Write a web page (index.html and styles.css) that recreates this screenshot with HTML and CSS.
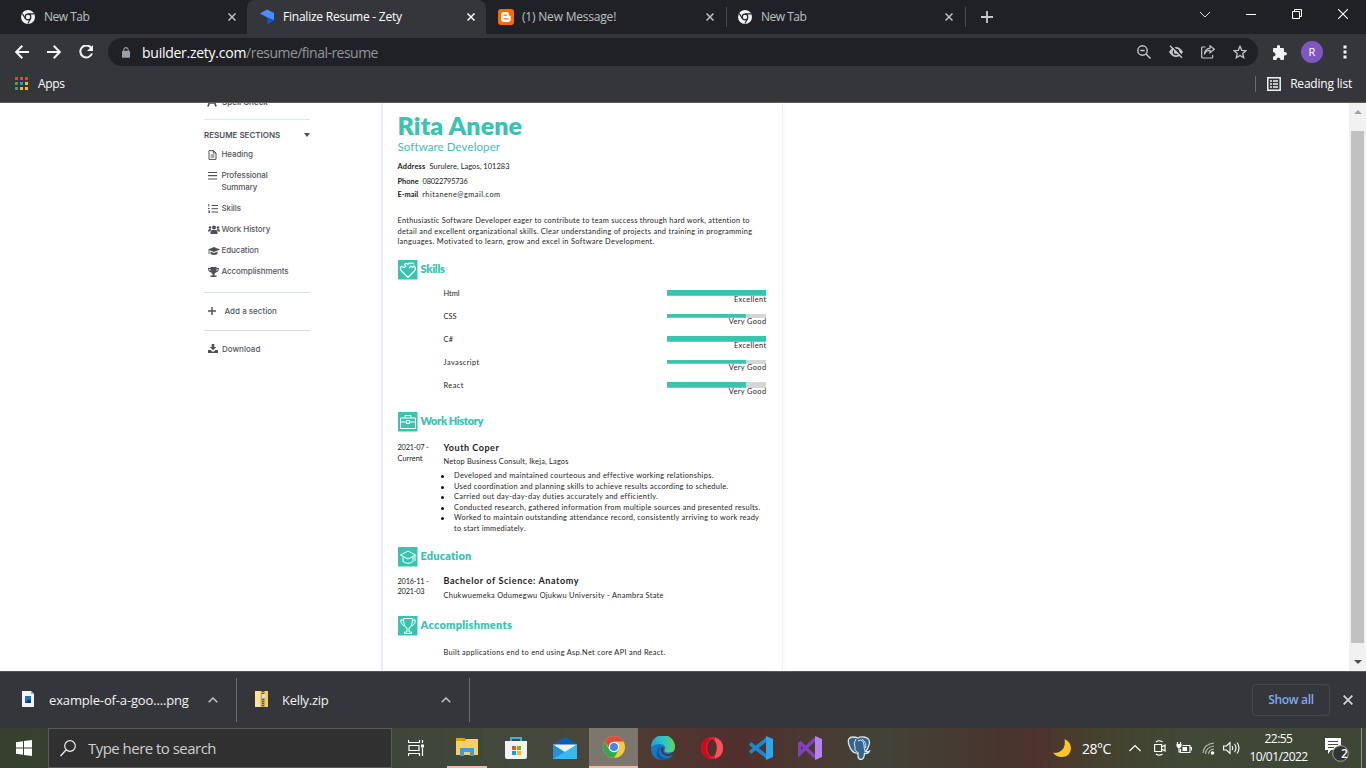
FILE: index.html
```html
<!DOCTYPE html>
<html lang="en">
<head>
<meta charset="utf-8">
<title>Finalize Resume - Zety</title>
<link rel="stylesheet" href="styles.css">
</head>
<body>
<svg class="defs" width="0" height="0">
  <symbol id="chromium" viewBox="0 0 14 14"><circle cx="7" cy="7" r="7" fill="#f1f3f4"/><circle cx="7" cy="7" r="3.4" fill="#202124"/><circle cx="7" cy="7" r="2.2" fill="#f1f3f4"/><path d="M7 3.9h6M4.3 8.5 1.3 3.6M9.7 8.6 6.9 13.6" stroke="#202124" stroke-width="1.1"/></symbol>
  <symbol id="x" viewBox="0 0 8 8"><path d="M.5.5l7 7M7.5.5l-7 7" stroke="currentColor" stroke-width="1.5"/></symbol>
  <symbol id="up" viewBox="0 0 10 6"><path d="M.7 5.3 5 1l4.300 4.300" fill="none" stroke="currentColor" stroke-width="1.500"/></symbol>
</svg>
<header class="tabs">
  <div class="tab first"><svg class="fav" width="14" height="14"><use href="#chromium"/></svg><span class="t-new">New Tab</span><svg class="close" width="8" height="8"><use href="#x"/></svg></div>
  <div class="tab active"><svg class="fav" width="15" height="16" viewBox="0 0 15 16"><path d="M0 4.500 7 .500l7 3.500v7.500L7.500 15.500V9z" fill="#0b57d0"/><path d="M0 4.500 7 .500l7 3.500v7L6.500 8z" fill="#4a8cff"/></svg><span class="t-zety">Finalize Resume - Zety</span><svg class="close" width="8" height="8"><use href="#x"/></svg></div>
  <div class="tab blog"><svg class="fav" width="16" height="16" viewBox="0 0 16 16"><rect width="16" height="16" rx="3" fill="#ff6a00"/><path d="M6 3h2.500Q11 3 11 6q0 .8 1 .8.8 0 .8.900V10q0 3-3 3H6q-3 0-3-3V6q0-3 3-3z" fill="#fff"/><path d="M6 6.200h2.300M6 9.800h4" stroke="#ff6a00" stroke-width="1.300" stroke-linecap="round"/></svg><span class="t-msg">(1) New Message!</span><svg class="close" width="8" height="8"><use href="#x"/></svg></div>
  <div class="tab last"><svg class="fav" width="14" height="14"><use href="#chromium"/></svg><span class="t-new">New Tab</span><svg class="close" width="8" height="8"><use href="#x"/></svg></div>
  <svg class="plus" width="12" height="12" viewBox="0 0 12 12"><path d="M6 0v12M0 6h12" stroke="#c8cacd" stroke-width="1.800"/></svg>
  <div class="winctl">
    <svg width="10" height="7" viewBox="0 0 10 7"><path d="M0 1l5 5 5-5" fill="none" stroke="#ddd"/></svg>
    <svg width="10" height="10" viewBox="0 0 10 10"><path d="M0 5.500h10" stroke="#fff"/></svg>
    <svg width="10" height="10" viewBox="0 0 10 10"><path d="M.5 2.500h7v7h-7zM2.500 2.500v-2h7v7h-2" fill="none" stroke="#fff"/></svg>
    <svg width="10" height="10" viewBox="0 0 10 10"><path d="M0 0l10 10M10 0 0 10" stroke="#fff" stroke-width="1.100"/></svg>
  </div>
</header>
<div class="toolbar">
  <svg class="back" width="14" height="14" viewBox="0 0 14 14"><path d="M14 7H1.500M7.300.8 1.100 7l6.200 6.200" fill="none" stroke="#f1f3f4" stroke-width="2"/></svg>
  <svg class="fwd" width="14" height="14" viewBox="0 0 14 14"><path d="M0 7h12.500M6.700.8 12.900 7l-6.200 6.200" fill="none" stroke="#f1f3f4" stroke-width="2"/></svg>
  <svg class="reload" width="14" height="14" viewBox="0 0 14 14"><path d="M12 2.700A6 6 0 1 0 13 8.500" fill="none" stroke="#f1f3f4" stroke-width="2"/><path d="M14 0v6H8z" fill="#f1f3f4"/></svg>
  <div class="omnibox">
    <svg class="lock" width="8" height="11" viewBox="0 0 9 12"><rect y="4" width="9" height="8" rx="1" fill="#9aa0a6"/><path d="M2 5V3a2.500 2.500 0 0 1 5 0v2" fill="none" stroke="#9aa0a6" stroke-width="1.200"/></svg>
    <span class="url"><b>builder.zety.com</b>/resume/final-resume</span>
    <div class="omni-icons">
      <svg width="14" height="14" viewBox="0 0 14 14"><circle cx="5.500" cy="5.500" r="4.700" fill="none" stroke="#c4c7ca" stroke-width="1.400"/><path d="M9 9l4.500 4.500M3.300 5.500h4.400" stroke="#c4c7ca" stroke-width="1.500"/></svg>
      <svg width="14" height="14" viewBox="0 0 14 14"><path d="M0 7Q3 2 7 2T14 7q-3 5-7 5T0 7z" fill="#c4c7ca"/><circle cx="7" cy="7" r="2.700" fill="none" stroke="#202124" stroke-width="1.200"/><path d="M2.200 0l12 12" stroke="#202124" stroke-width="1.600"/><path d="M1 .8l12 12" stroke="#c4c7ca" stroke-width="1.500"/></svg>
      <svg width="14" height="14" viewBox="0 0 14 14"><path d="M4.500 2H1.700q-1 0-1 1v9q0 1 1 1h9q1 0 1-1v-2M3.500 9.500Q4 5.500 9 5.300v2.500l4.300-3.600L9 .8v2.400Q3.500 4 3.500 9.500z" fill="none" stroke="#c4c7ca" stroke-width="1.200"/></svg>
      <svg width="14" height="14" viewBox="0 0 14 14"><path d="M7 1.300l1.700 4 4.300.4-3.300 2.800 1 4.200L7 10.500l-3.700 2.200 1-4.200L1 5.700l4.300-.4z" fill="none" stroke="#c4c7ca" stroke-width="1.300"/></svg>
    </div>
  </div>
  <svg class="ext" width="15" height="15" viewBox="0 0 15 15"><path d="M1 4q0-1 1-1h3Q4.500 0 6.500 0T8 3h3q1 0 1 1v3q3-.2 3 1.800T12 10.500V14q0 1-1 1H8.500q.2-2.500-2-2.500t-2 2.500H2q-1 0-1-1v-2.500q2.500.2 2.500-2T1 7z" fill="#f1f3f4"/></svg>
  <span class="avatar">R</span>
  <svg class="dots" width="4" height="14" viewBox="0 0 4 14"><path d="M.5.500h3v3h-3zM.5 5.500h3v3h-3zM.5 10.500h3v3h-3z" fill="#f1f3f4"/></svg>
</div>
<div class="bookmarks">
  <svg class="apps" width="13" height="14" viewBox="0 0 13 14"><path d="M0 0h3v3H0zM5 0h3v3H5zM10 0h3v3h-3z" fill="#ea4335"/><path d="M0 5h3v3H0zM0 10h3v3H0z" fill="#34a853"/><path d="M5 5h3v3H5z" fill="#2f8df5"/><path d="M10 5h3v3h-3zM5 10h3v3H5zM10 10h3v3h-3z" fill="#fbbc05"/></svg>
  <span class="t-apps">Apps</span>
  <i class="vr"></i>
  <svg width="14" height="14" viewBox="0 0 14 14"><path d="M.8.8h12.400v12.400H.8z" fill="none" stroke="#f1f3f4" stroke-width="1.500"/><path d="M3 4h2M6 4h5M3 7h2M6 7h5M3 10h2M6 10h5" stroke="#f1f3f4" stroke-width="1.600"/></svg>
  <span class="t-read">Reading list</span>
</div>

<main class="page">
  <aside class="side">
    <div class="spell"><svg width="10" height="10" viewBox="0 0 10 10"><path d="M1 9.500 4 1h2l3 8.500M2.500 6h5" fill="none" stroke="#4f5159" stroke-width="1.700"/></svg><span>Spell Check</span></div>
    <div class="sec-title"><span>RESUME SECTIONS</span><i class="tri"></i></div>
    <ul class="nav">
      <li><svg width="9" height="10" viewBox="0 0 9 10"><path d="M1 .6h4.500L8 3v6.400H1zM5.300.6V3H8M2.700 5h3.600M2.700 7h3.600" fill="none" stroke="#4f5159"/></svg><span>Heading</span></li>
      <li class="two"><svg width="9" height="9" viewBox="0 0 9 9"><path d="M0 1.500h9M0 4.700h9M0 8h9" stroke="#4f5159" stroke-width="1.200"/></svg><span>Professional<br>Summary</span></li>
      <li><svg width="10" height="9" viewBox="0 0 10 9"><path d="M3.500 1.500H10M3.500 4.700H10M3.500 8H10M.8 0v2.500M0 4.500h1.500M0 7h1.500v2H0" fill="none" stroke="#4f5159"/></svg><span>Skills</span></li>
      <li><svg width="12" height="9" viewBox="0 0 12 9"><circle cx="6" cy="2.500" r="2"/><circle cx="2" cy="2.500" r="1.300"/><circle cx="10" cy="2.500" r="1.300"/><path d="M2.500 9V7q0-2 2-2h3q2 0 2 2v2zM0 6q0-2 2-2 1 0 1.300.5L2 6.500H0zM12 6q0-2-2-2-1 0-1.300.5L10 6.500h2z"/></svg><span>Work History</span></li>
      <li><svg width="12" height="9" viewBox="0 0 12 9"><path d="M0 3.500 6 1l6 2.500L6 6z"/><path d="M2.500 5.500 6 7l3.500-1.500V8Q6 9.800 2.500 8zM.6 4h.9v4H.6z"/></svg><span>Education</span></li>
      <li><svg width="11" height="10" viewBox="0 0 11 10"><path d="M2.500 0h6v1H11q0 4-3.200 4.500L6.500 7v1.500h2V10h-6V8.500h2V7L3.200 5.500Q0 5 0 1h2.500z"/><path d="M1 2h1.300l.3 2Q1.200 3.500 1 2zm9 0H8.700l-.3 2Q9.800 3.500 10 2z" fill="#fff"/></svg><span>Accomplishments</span></li>
    </ul>
    <div class="action add"><svg width="8" height="8" viewBox="0 0 8 8"><path d="M4 0v8M0 4h8" stroke="#4f5159" stroke-width="1.400"/></svg><span>Add a section</span></div>
    <div class="action dl"><svg width="10" height="9" viewBox="0 0 10 9"><path d="M3.700 0h2.600v3h2L5 6.200 1.700 3h2zM0 6h2.500L5 8l2.500-2H10v3H0z"/></svg><span>Download</span></div>
  </aside>

  <article class="resume">
    <h1>Rita Anene</h1>
    <p class="role">Software Developer</p>
    <p class="contact addr"><b>Address</b><span>Surulere, Lagos, 101283</span></p>
    <p class="contact phone"><b>Phone</b><span>08022795736</span></p>
    <p class="contact mail"><b>E-mail</b><span>rhitanene@gmail.com</span></p>
    <p class="summary"><span class="s1">Enthusiastic Software Developer eager to contribute to team success through hard work, attention to</span><br><span class="s2">detail and excellent organizational skills. Clear understanding of projects and training in programming</span><br><span class="s3">languages. Motivated to learn, grow and excel in Software Development.</span></p>

    <h2 class="h-skills"><svg width="20" height="20" viewBox="0 0 20 20"><rect width="19.500" height="19.500" fill="#3bc3b2"/><path d="M10 17.500 3 10.500Q1.500 8 3.500 6.200L6 7.500l2-1.200L6.500 4.500Q8.500 2.500 10 4.500 11 2 12.700 3.700 14.500 2 16 4.500M11 8l2-2 1.500 1.500L16.500 6Q18.500 8.500 16.500 11L10 17.500" fill="none" stroke="#fff" stroke-width="1.100"/></svg><span>Skills</span></h2>
    <ul class="skills">
      <li><span class="k html">Html</span><div class="rate"><div class="bar"><i style="width:100%"></i></div><em>Excellent</em></div></li>
      <li><span class="k css">CSS</span><div class="rate"><div class="bar"><i style="width:80%"></i></div><em>Very Good</em></div></li>
      <li><span class="k">C#</span><div class="rate"><div class="bar"><i style="width:100%"></i></div><em>Excellent</em></div></li>
      <li><span class="k">Javascript</span><div class="rate"><div class="bar"><i style="width:80%"></i></div><em>Very Good</em></div></li>
      <li><span class="k">React</span><div class="rate"><div class="bar"><i style="width:80%"></i></div><em>Very Good</em></div></li>
    </ul>

    <h2 class="h-work"><svg width="20" height="20" viewBox="0 0 20 20"><rect width="19.500" height="19.500" fill="#3bc3b2"/><path d="M2.500 6h15v10.500h-15zM7 6V3.500h6V6M2.500 10h6M11.500 10h6M8.500 8.500h3v3h-3z" fill="none" stroke="#fff"/></svg><span>Work History</span></h2>
    <div class="entry">
      <div class="date"><span class="from">2021-07 -</span><br>Current</div>
      <div class="detail">
        <h3 class="w-title">Youth Coper</h3>
        <p class="org w-org">Netop Business Consult, Ikeja, Lagos</p>
        <ul class="duties">
          <li><span class="d1">Developed and maintained courteous and effective working relationships.</span></li>
          <li><span class="d2">Used coordination and planning skills to achieve results according to schedule.</span></li>
          <li><span class="d3">Carried out day-day-day duties accurately and efficiently.</span></li>
          <li><span class="d4">Conducted research, gathered information from multiple sources and presented results.</span></li>
          <li><span class="d5">Worked to maintain outstanding attendance record, consistently arriving to work ready</span><br><span class="d6">to start immediately.</span></li>
        </ul>
      </div>
    </div>

    <h2 class="h-edu"><svg width="20" height="20" viewBox="0 0 20 20"><rect width="19.500" height="19.500" fill="#3bc3b2"/><path d="M2.500 8 10 4l7.500 4L10 12zM5 10v4.500q5 3.500 10 0V10M17 8.500V14" fill="none" stroke="#fff"/></svg><span>Education</span></h2>
    <div class="entry">
      <div class="date"><span class="from">2016-11 -</span><br><span class="from">2021-03</span></div>
      <div class="detail">
        <h3 class="e-title">Bachelor of Science: Anatomy</h3>
        <p class="org e-org">Chukwuemeka Odumegwu Ojukwu University - Anambra State</p>
      </div>
    </div>

    <h2 class="h-acc"><svg width="20" height="20" viewBox="0 0 20 20"><rect width="19.500" height="19.500" fill="#3bc3b2"/><path d="M5.500 2.500h9q0 8-3.500 9.500v4h2.500v1.500h-7V16H9v-4Q5.500 10.500 5.500 2.500zM5.500 4H2.700q0 5 4.300 6M14.500 4h2.800q0 5-4.300 6" fill="none" stroke="#fff"/></svg><span>Accomplishments</span></h2>
    <p class="built">Built applications end to end using Asp.Net core API and React.</p>
  </article>
  <div class="scroll"><i class="arr-up"></i><i class="thumb"></i><i class="arr-down"></i></div>
</main>

<section class="downloads">
  <div class="item one"><svg width="12" height="16" viewBox="0 0 12 16"><path d="M0 0h9l3 3v13H0z" fill="#f4f4f4"/><path d="M9 0v3h3" fill="#aaa"/><path d="M3 5h6v7H3z" fill="#1876c9"/><path d="M3 12l4-4 2 2v2z" fill="#123c78"/></svg><span class="f1">example-of-a-goo....png</span><svg class="chev" width="10" height="6"><use href="#up"/></svg></div>
  <div class="item two"><svg width="13" height="16" viewBox="0 0 13 16"><path d="M0 0h13v16H0z" fill="#f3cf62"/><path d="M0 0h5v16H0z" fill="#ffe394"/><path d="M6 0h4v16H6z" fill="#b9a56a"/><path d="M8 0v16" stroke="#555" stroke-dasharray="1 1" stroke-width="2"/><path d="M7 3h3v4H7z" fill="#ddd"/></svg><span class="f2">Kelly.zip</span><svg class="chev" width="10" height="6"><use href="#up"/></svg></div>
  <button class="showall"><span>Show all</span></button>
  <svg class="dclose" width="10" height="10"><use href="#x"/></svg>
</section>

<footer class="taskbar">
  <div class="start"><svg width="16" height="16" viewBox="0 0 16 16"><path d="M0 2.300 7 1.300V7.500H0zM8 1.100 16 0v7.500H8zM0 8.500h7v6.200L0 13.700zM8 8.500h8V16L8 14.900z" fill="#fff"/></svg></div>
  <div class="search"><svg width="16" height="17" viewBox="0 0 16 17"><circle cx="10" cy="6" r="5.300" fill="none" stroke="#eee" stroke-width="1.200"/><path d="M6.300 9.800.5 16" stroke="#eee" stroke-width="1.300"/></svg><span>Type here to search</span></div>
  <div class="cell tv"><svg width="17" height="16" viewBox="0 0 17 16"><path d="M.5 0v2.500h11V0M.5 16v-2.500h11V16M1 5.500h10v5H1zM14.500 0v3M14.500 8v8" fill="none" stroke="#fff" stroke-width="1.200"/><path d="M13 4.500h3v3h-3z" fill="#fff"/></svg></div>
  <div class="cell open"><svg width="22" height="20" viewBox="0 0 22 20"><path d="M0 4h8l2-2h12v16H0z" fill="#ffcf5c"/><path d="M0 1h9v2l-2 1H0z" fill="#e6a000"/><path d="M4 11h14v8h-4v-4H8v4H4z" fill="#3f9be5"/></svg></div>
  <div class="cell"><svg width="24" height="24" viewBox="0 0 24 24"><path d="M7 6V2h10v4" fill="none" stroke="#35b4e8" stroke-width="2"/><path d="M1 5h22v16q0 2-2 2H3q-2 0-2-2z" fill="#f2f2f2"/><path d="M8 10h4v4H8z" fill="#f25022"/><path d="M13 10h4v4h-4z" fill="#7fba00"/><path d="M8 15h4v4H8z" fill="#00a4ef"/><path d="M13 15h4v4h-4z" fill="#ffb900"/></svg></div>
  <div class="cell"><svg width="24" height="24" viewBox="0 0 24 24"><path d="M0 8 12 1l12 7v4H0z" fill="#0a5fb4"/><path d="M0 8.500h24L12 18z" fill="#f2f2f2"/><path d="M0 8.500 12 16l3 7H0z" fill="#1f93e0"/><path d="M24 8.500V23H0z" fill="#35b9f1"/></svg></div>
  <div class="cell open current"><svg width="22" height="22" viewBox="0 0 22 22"><circle cx="11" cy="11" r="11" fill="#fbc934"/><path d="M1.500 5.500A11 11 0 0 0 11 22l4.800-8.300H6.200z" fill="#2da94f"/><path d="M1.500 5.500A11 11 0 0 1 20.500 5.500H11L6.300 12z" fill="#dd4b3e"/><circle cx="11" cy="11" r="5.200" fill="#fff"/><circle cx="11" cy="11" r="4" fill="#4285f4"/></svg></div>
  <div class="cell"><svg width="24" height="24" viewBox="0 0 24 24"><defs><linearGradient id="eg"><stop offset="0" stop-color="#1ba5dc"/><stop offset=".55" stop-color="#30c5c0"/><stop offset="1" stop-color="#61d958"/></linearGradient></defs><path d="M0 12A12 12 0 0 1 24 12q0 4-5 5l3 2q-4 5-10 5Q0 24 0 12z" fill="#1378c8"/><path d="M0 11A12 12 0 0 1 24 11q0 5.500-6 5.500-5 0-4.500-2.500 2-3-1-5Q6 6 0 11z" fill="url(#eg)"/><path d="M10 10q-4 4-1 9 4 5 11 2.500-4 3-9 2.500-7-2-5-9 1-4 4-5z" fill="#17559c"/><path d="M13 12.500q-2 3 1.500 5 3 1 6.500-.5l1 1.500q-5 3-9 .5t-3-7q1.500-2 3 .5z" fill="#4e3a35"/></svg></div>
  <div class="cell"><svg width="22" height="22" viewBox="0 0 22 22"><circle cx="11" cy="11" r="11" fill="#f21f30"/><path d="M14 .5q8 2 8 10.500t-8 10.500z" fill="#ff5159"/><path d="M11 0A11 11 0 0 0 11 22Q5 18 5 11t6-11z" fill="#d6051d"/><ellipse cx="11" cy="11" rx="4.800" ry="8.700" fill="#50312e"/></svg></div>
  <div class="cell"><svg width="24" height="24" viewBox="0 0 24 24"><path d="M1 7.500 18 21M1 16.500 18 3" stroke="#168bd2" stroke-width="3.600"/><path d="M17 0l7 3v18l-7 3z" fill="#2aa5ef"/></svg></div>
  <div class="cell"><svg width="24" height="24" viewBox="0 0 24 24"><path d="M1.500 6v12L17 3M1.500 6 17 21" fill="none" stroke="#8141bd" stroke-width="3.300"/><path d="M17 0l7 3v18l-7 3z" fill="#b583ee"/></svg></div>
  <div class="cell"><svg width="24" height="24" viewBox="0 0 24 24"><path d="M2 9Q-.5 1 6 1q3 0 5 1 2-1.500 6-1 7 1 5 8-1 4-3.500 6.500 2.500.3 4-.5-1 3-5 2.500-.5 6-3.500 6-3.500 0-3-6.500Q5 18 2 9z" fill="#336791" stroke="#dce5ec" stroke-width="1.300"/><path d="M9 3q-3 4-1 8-1 3 2 5M15 3q5 4 3.500 9M11 5q5-3 6 4 0 4 1.500 7" fill="none" stroke="#dce5ec"/></svg></div>
  <div class="tray">
    <div class="moon"><svg width="18" height="18" viewBox="0 0 18 18"><path d="M11.500 0Q18 3 18 9.500 17 18 9 18 3 18 0 13.500 5 15 9 11t2.500-11z" fill="#fdc921"/></svg></div>
    <span class="temp">28°C</span>
    <div class="t1"><svg width="12" height="8" viewBox="0 0 12 8"><path d="M.5 7 6 1.500 11.500 7" fill="none" stroke="#fff" stroke-width="1.200"/></svg></div>
    <div class="t2"><svg width="12" height="16" viewBox="0 0 12 16"><path d="M.6 4.500h7v7h-7zM7.600 7l3.400-2v6L7.600 9M2 2q3-2.500 6.500 0M2 14q3 2.500 6.500 0" fill="none" stroke="#fff" stroke-width="1.200"/></svg></div>
    <div class="t3"><svg width="16" height="13" viewBox="0 0 16 13"><path d="M6.500 3.500H14v7H4.500V7M14.500 5.500h1v3M1.500 0v2M4.500 0v2M3 5v5h1.500" fill="none" stroke="#fff" stroke-width="1.100"/><path d="M.5 2h5v2q0 2-2.500 2T.5 4zM6.500 5H11v4H6.500z" fill="#fff"/></svg></div>
    <div class="t4"><svg width="13" height="13" viewBox="0 0 13 13"><path d="M1 11Q2 2 12 1M3.500 12Q4 5 12 4M6.500 12Q7 7.500 12 7" fill="none" stroke="#b9beb9" stroke-width="1.100"/><circle cx="10.500" cy="11" r="1.800" fill="#fff"/></svg></div>
    <div class="t5"><svg width="17" height="14" viewBox="0 0 17 14"><path d="M.6 5h2.900L7 1.500v11L3.500 9H.6zM9 5q1.500 2 0 4M11.500 3q3 4 0 8M14 1.500q4 5.500 0 11" fill="none" stroke="#fff" stroke-width="1.100"/></svg></div>
    <div class="clock"><span class="c1">22:55</span><span class="c2">10/01/2022</span></div>
    <div class="notes"><svg width="24" height="24" viewBox="0 0 24 24"><path d="M0 0h16v12H6l-3 4v-4H0z" fill="#fff"/><path d="M3 3.500h10M3 6.500h10M3 9.500h6" stroke="#444b3f"/><circle cx="15.500" cy="15.500" r="7.800" fill="#30352f" stroke="#9da19c"/></svg><span class="badge">2</span></div>
    <i class="desk"></i>
  </div>
</footer>
</body>
</html>
```
FILE: styles.css
```css
*{box-sizing:border-box}
body{margin:0;width:1366px;height:768px;overflow:hidden;display:flex;flex-direction:column;background:#fff;font-family:"Open Sans","Noto Sans",sans-serif;font-size:12px;color:#e8eaed}
ul,p,h1,h2,h3{margin:0;padding:0;list-style:none}
svg{display:block;flex:none}
.defs{position:absolute}
span,b{white-space:nowrap}

/* browser tabs */
.tabs{height:34px;background:#202124;display:flex;flex:none;align-items:center}
.tab{height:34px;display:flex;align-items:center;color:#bdc1c6;font-size:12px;flex:none}
.tab span{margin-bottom:1px}
.tab .close{margin-left:auto}
.first{width:247px;padding:0 11px 0 21px}
.first .fav,.last .fav{margin-right:9px}
.active{width:239px;padding:0 11px 0 13px;background:#35363a;border-radius:8px 8px 0 0;color:#fff}
.active .fav{margin-right:8px}
.blog{width:241px;height:20px;padding:0 12px 0 12px;border-right:1px solid #4a4c50}
.blog .fav{margin-right:8px}
.last{width:239px;height:20px;padding:0 12px 0 11px;border-right:1px solid #4a4c50}
.t-new{letter-spacing:-.5px}
.t-zety{letter-spacing:-.23px}
.t-msg{letter-spacing:-.2px}
.plus{margin-left:15px}
.winctl{display:flex;align-items:center;gap:36px;margin-left:auto;padding-right:18px;margin-bottom:6px}

/* toolbar */
.toolbar{height:36px;flex:none;background:#35363a;display:flex;align-items:center}
.back{margin-left:15px}
.fwd{margin-left:18px}
.reload{margin-left:18px}
.omnibox{width:1150px;height:28px;margin-left:15px;border-radius:14px;background:#202124;display:flex;align-items:center;padding:0 11px 0 14px;flex:none}
.url{margin-left:12px;font-size:14px;color:#92969b;letter-spacing:-.52px}
.url b{font-weight:400;color:#fff;letter-spacing:-.26px}
.omni-icons{display:flex;gap:18px;margin-left:auto}
.ext{margin-left:14px}
.avatar{width:22px;height:22px;border-radius:50%;background:#7e57c2;color:#fff;font-size:11px;line-height:22px;text-align:center;margin-left:14px}
.dots{margin-left:20px}
.bookmarks{height:33px;flex:none;background:#35363a;border-bottom:1px solid #5b5c60;display:flex;align-items:center;padding:0 14px 4px 15px;font-size:12px;color:#fff}
.bookmarks span{margin-bottom:1px}
.t-apps{margin-left:10px;letter-spacing:-.3px}
.vr{width:1px;height:16px;background:#696b6e;margin-left:auto;margin-right:11px}
.t-read{margin-left:9px;letter-spacing:-.2px}

/* page */
.page{height:568px;flex:none;display:flex;background:#fff;color:#000;overflow:hidden}
.side{width:106px;margin-left:204px;flex:none;color:#54565d;font:500 8px Inter,"Open Sans",sans-serif;fill:#4f5159}
.spell{height:17px;border-bottom:1px solid #e1e8ee;display:flex;padding-left:3px}
.spell svg{margin-top:-6px}
.spell span{margin:-6px 0 0 5px;line-height:10px;font-weight:600}
.sec-title{height:20px;margin-top:5px;display:flex;align-items:center;justify-content:space-between;font-size:8px;font-weight:600;color:#4f5159}
.tri{border:3px solid transparent;border-top:4px solid #4f5159;border-bottom:0}
.nav{padding-bottom:10px;border-bottom:1px solid #d5dfe7}
.nav li{height:21px;display:flex;align-items:flex-start;padding:5px 0 0 4px}
.nav li:first-child{margin-top:-1px}
.nav li.two{height:33px}
.nav svg{margin-top:1px}
.nav li span{line-height:10px;margin-left:auto;width:88.500px;letter-spacing:-.1px}
.nav li.two span{line-height:12px;margin-top:-1px}
.action{display:flex;align-items:center;height:38px;padding:0 0 2px 4px}
.add{border-bottom:1px solid #d5dfe7}
.add span{margin-left:8.500px}
.action.dl{height:36px;padding-bottom:1px}
.dl span{margin-left:4px}

.resume{width:402px;margin-left:71px;flex:none;border-left:2px solid #ebf0f5;border-right:1px solid #f0f2f6;box-shadow:0 0 4px #eef1f5;padding:9px 17px 0 14.500px;font:7.400px/10.600px Lato,"Open Sans",sans-serif;color:#1c1c1c}
h1{font-size:25px;line-height:26px;height:28px;font-weight:800;color:#3bc3b2;letter-spacing:.1px}
.role{font-size:11.500px;line-height:14px;height:14px;color:#3bc3b2;letter-spacing:.1px}
.contact{height:14px;line-height:14px;display:flex;gap:4px}
.addr{margin-top:6px;letter-spacing:.07px}
.addr b{letter-spacing:.2px}
.phone{line-height:16px}
.phone span{letter-spacing:-.2px}
.mail{height:13px;line-height:13px}
.mail span{letter-spacing:.46px}
.summary{margin-top:15px;height:31px}
.s1{letter-spacing:.26px}
.s2{letter-spacing:.29px}
.s3{letter-spacing:.33px}
h2{height:20px;display:flex;align-items:center;gap:3px;font-size:11px;line-height:18px;font-weight:800;color:#3bc3b2;padding-bottom:0}
h2 span{margin-bottom:2px}
.h-skills{margin-top:13px;letter-spacing:-.25px}
.h-work{margin-top:9px;letter-spacing:-.4px}
.h-edu{margin-top:13px;letter-spacing:.15px}
.h-acc{margin-top:14px;letter-spacing:.25px}
.skills{margin-top:8px;padding-left:46px}
.skills li{height:23px;display:flex;justify-content:space-between}
.k{line-height:11px;letter-spacing:.42px}
.k.html,.k.css{letter-spacing:0}
.rate{width:99px;padding-top:2px;margin-right:-1px;text-align:right;line-height:8px}
.bar{height:6px;background:#d5d6d7}
.bar i{display:block;height:100%;background:#3bc3b2;border-bottom:1px solid #63cfc1}
.skills li:nth-child(even) .rate{padding-top:3px}
.skills li:nth-child(even) .bar{height:4px}
.rate em{font-style:normal;display:block;letter-spacing:.36px;margin-right:-.4px}
.entry{display:flex;margin-top:10px}
.date{width:46px;padding-top:1px;flex:none}
.from{letter-spacing:-.22px}
.detail{flex:none}
h3{font-size:9px;line-height:12px;height:12px;font-weight:700}
.w-title{letter-spacing:.53px}
.e-title{letter-spacing:.6px}
.org{line-height:13px;height:13px;margin-top:1px}
.w-org{letter-spacing:.2px}
.e-org{letter-spacing:.3px}
.duties{margin-top:3px}
.duties li{padding-left:10.500px;position:relative}
.duties li::before{content:"";position:absolute;left:-3px;top:4px;width:3px;height:3px;border-radius:50%;background:#111}
.d1{letter-spacing:.31px}
.d2{letter-spacing:.28px}
.d3{letter-spacing:.34px}
.d4{letter-spacing:.29px}
.d5{letter-spacing:.29px}
.d6{letter-spacing:.25px}
.h-edu{margin-top:12px}
.h-edu + .entry{margin-top:8px}
.h-edu + .entry .date{padding-top:2px}
.h-edu + .entry .org{margin-top:2px}
.built{margin:12px 0 0 46px;letter-spacing:.29px}

.scroll{width:17px;margin-left:auto;background:#f1f1f1;display:flex;flex-direction:column;align-items:center;flex:none}
.arr-up{margin-top:7px;border:4px solid transparent;border-bottom:4px solid #a3a3a3;border-top:0}
.thumb{width:13px;height:512px;background:#c1c1c1;margin-top:17px}
.arr-down{margin-top:17px;border:4px solid transparent;border-top:4px solid #505050;border-bottom:0}

/* downloads shelf */
.downloads{height:57px;flex:none;background:#35363a;border-top:1px solid #58595d;display:flex;align-items:center;color:#fff}
.item{display:flex;align-items:center;height:44px;border-right:1px solid #6b6d70;font-size:13px;color:#f1f3f4}
.item.one{width:237px;padding:0 18px 0 22px}
.item.two{width:233px;padding:0 18px}
.item svg:first-child{margin-bottom:2px}
.item .chev{margin-left:auto;color:#bfc2c5}
.f1{margin-left:15px;letter-spacing:-.15px}
.f2{margin-left:14px;letter-spacing:-.3px}
.showall{margin:0 0 0 auto;width:78px;height:32px;padding:0 0 1px;background:transparent;border:1px solid #45474b;border-radius:4px;color:#7eaaf6;font:600 12px "Open Sans",sans-serif;letter-spacing:-.3px}
.dclose{margin:0 13px;color:#cfd1d3}

/* taskbar */
.taskbar{height:40px;flex:none;display:flex;background:linear-gradient(90deg,#36402f 0,#3d4638 390px,#41493d 500px,#49463b 590px,#50382f 660px,#502f2d 740px,#4b3830 800px,#424338 880px,#46372f 980px,#4d342d 1040px,#44412f 1100px,#404936 1180px,#3e4736 1366px);color:#fff}
.start{width:48px;display:flex;align-items:center;justify-content:center}
.search{width:344px;border:1px solid #5a5b59;background:#303030;display:flex;align-items:center;padding-left:11px;color:#cfcfcf;font-size:15px;letter-spacing:-.53px}
.search span{margin-left:12px}
.cell{width:49px;display:flex;align-items:center;justify-content:center}
.cell.tv{width:50px;padding-right:2px}
.cell.open{border-bottom:2px solid #f8b5aa;margin:0 4.500px;width:40px}
.cell.current{margin:0;width:49px;background:#7b776e}
.tray{margin-left:auto;display:flex;align-items:center;height:40px}
.tray>div{display:flex;justify-content:center;flex:none}
.moon{width:36px}
.temp{width:42px;padding-left:2px;font-size:14px;letter-spacing:-.5px}
.t1{width:26px}.t2{width:24px}.t3{width:23px}.t4{width:27px}.t5{width:19px}
.tray>.clock{width:74px;flex-direction:column;align-items:center;font-size:12px;line-height:18px;letter-spacing:-.55px;padding-left:1px}
.tray>.notes{width:36px;position:relative;padding:3px 0 0 8px}
.badge{position:absolute;left:22px;top:9px;width:15px;text-align:center;font-size:12px;line-height:20px;font-weight:600}
.desk{width:1px;height:40px;background:#8b9086;margin:0 4px 0 10px}
```
